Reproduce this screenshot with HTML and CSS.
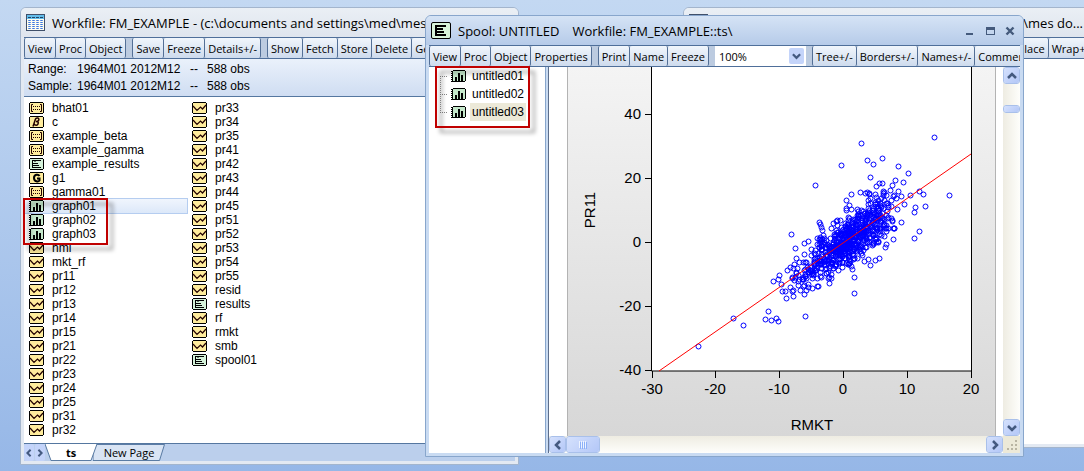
FILE: index.html
```
<!DOCTYPE html>
<html lang="en">
<head>
<meta charset="utf-8">
<title>Workfile: FM_EXAMPLE</title>
<link rel="stylesheet" href="styles.css">
</head>
<body>
<svg class="defs" aria-hidden="true">
  <symbol id="series" viewBox="0 0 15 12"><path d="M1 0h13v1h1v10h-1v1H1v-1H0V1h1z" fill="#000"/><path d="M1 1h13v10H1z" fill="#ffec9c"/><path d="M1 4l4 4.500L8.500 5l2 2L14 3" fill="none" stroke="#200" stroke-width="1.200"/></symbol>
  <symbol id="matrix" viewBox="0 0 15 12"><path d="M1 0h13v1h1v10h-1v1H1v-1H0V1h1z" fill="#000"/><path d="M1 1h13v10H1z" fill="#ffec9c"/><path d="M4 2.500H2.500v7H4M11 2.500h1.500v7H11" fill="none" stroke="#200"/><path d="M4 4h1v1H4zM6 4h1v1H6zM8 4h1v1H8zM10 4h1v1h-1zM4 7h1v1H4zM6 7h1v1H6zM8 7h1v1H8zM10 7h1v1h-1z" fill="#200"/></symbol>
  <symbol id="coef" viewBox="0 0 15 12"><path d="M1 0h13v1h1v10h-1v1H1v-1H0V1h1z" fill="#000"/><path d="M1 1h13v10H1z" fill="#ffec9c"/><path d="M4 10.500L6.500 3C7 1.500 10.500 1.500 9.800 4 9.500 5.500 8 5.500 7 5.500 9.500 5.500 9.500 6.500 9 8 8.500 9.500 6 9.500 5.200 8.200" fill="none" stroke="#200" stroke-width="1.500"/></symbol>
  <symbol id="group" viewBox="0 0 15 12"><path d="M1 0h13v1h1v10h-1v1H1v-1H0V1h1z" fill="#000"/><path d="M1 1h13v10H1z" fill="#ffec9c"/><path d="M10.500 4C9.500 2 5 2 5 6s4.500 4 5.500 2.500V6.500H8" fill="none" stroke="#000" stroke-width="2"/></symbol>
  <symbol id="spool" viewBox="0 0 15 12"><path d="M1 0h13v1h1v10h-1v1H1v-1H0V1h1z" fill="#000"/><path d="M1 1h13v10H1z" fill="#d5f2da"/><path d="M3 2.500h9M3.500 2v8M3 5.500h6M6 3v1M3 7.500h7M3 9.500h9" fill="none" stroke="#000"/></symbol>
  <symbol id="graph" viewBox="0 0 15 12"><path d="M2 0h12v1h1v10h-1v1H2v-1H1V1h1z" fill="#000"/><path d="M2 1h12v10H2z" fill="#c5e8cb"/><path d="M0 1h2v1H0zM0 3h2v1H0zM0 5h2v1H0zM0 7h2v1H0zM0 9h2v1H0zM0 11h2v1H0zM4 7h2v4H4zM7 3h2v8H7zM10 5h2v6h-2z" fill="#000"/></symbol>
  <symbol id="left" viewBox="0 0 10 10"><path d="M7 1L3 5l4 4" fill="none" stroke="#445a80" stroke-width="2.500"/></symbol>
  <symbol id="right" viewBox="0 0 10 10"><path d="M3 1l4 4-4 4" fill="none" stroke="#445a80" stroke-width="2.500"/></symbol>
  <symbol id="up" viewBox="0 0 10 10"><path d="M1 7l4-4 4 4" fill="none" stroke="#445a80" stroke-width="2.500"/></symbol>
  <symbol id="down" viewBox="0 0 10 10"><path d="M1 3l4 4 4-4" fill="none" stroke="#445a80" stroke-width="2.500"/></symbol>
</svg>

<main class="desktop">
  <section class="window workfile">
    <header class="titlebar">
      <svg class="title-icon" viewBox="0 0 19 17"><path d="M0 0h19v17H0z" fill="#40506a"/><path d="M1 1h17v4H1z" fill="#62bdeb"/><path d="M2 3h3v1H2zM6 3h3v1H6zM10 3h3v1h-3zM14 3h3v1h-3z" fill="#246"/><path d="M1 5h17v11H1z" fill="#fffef0"/><path d="M3.500 6v9M7.500 6v9M11.500 6v9M15.500 6v9" stroke="#3e78e0" stroke-width="2.500" stroke-dasharray="1 1"/></svg>
      <h1>Workfile: FM_EXAMPLE - (c:\documents and settings\med\mes do...</h1>
    </header>
    <nav class="toolbar">
      <button>View</button><button>Proc</button><button>Object</button><span class="gap"></span>
      <button>Save</button><button>Freeze</button><button>Details+/-</button><span class="gap"></span>
      <button>Show</button><button>Fetch</button><button>Store</button><button>Delete</button><button>Genr</button>
    </nav>
    <dl class="info">
      <dt>Range:</dt><dd>1964M01 2012M12</dd><dd>--</dd><dd>588 obs</dd>
      <dt>Sample:</dt><dd>1964M01 2012M12</dd><dd>--</dd><dd>588 obs</dd>
    </dl>
    <div class="objects">
      <ul>
        <li><svg><use href="#matrix"/></svg>bhat01</li>
        <li><svg><use href="#coef"/></svg>c</li>
        <li><svg><use href="#matrix"/></svg>example_beta</li>
        <li><svg><use href="#matrix"/></svg>example_gamma</li>
        <li><svg><use href="#spool"/></svg>example_results</li>
        <li><svg><use href="#group"/></svg>g1</li>
        <li><svg><use href="#matrix"/></svg>gamma01</li>
        <li class="selected"><svg><use href="#graph"/></svg>graph01</li>
        <li><svg><use href="#graph"/></svg>graph02</li>
        <li><svg><use href="#graph"/></svg>graph03</li>
        <li><svg><use href="#series"/></svg>hml</li>
        <li><svg><use href="#series"/></svg>mkt_rf</li>
        <li><svg><use href="#series"/></svg>pr11</li>
        <li><svg><use href="#series"/></svg>pr12</li>
        <li><svg><use href="#series"/></svg>pr13</li>
        <li><svg><use href="#series"/></svg>pr14</li>
        <li><svg><use href="#series"/></svg>pr15</li>
        <li><svg><use href="#series"/></svg>pr21</li>
        <li><svg><use href="#series"/></svg>pr22</li>
        <li><svg><use href="#series"/></svg>pr23</li>
        <li><svg><use href="#series"/></svg>pr24</li>
        <li><svg><use href="#series"/></svg>pr25</li>
        <li><svg><use href="#series"/></svg>pr31</li>
        <li><svg><use href="#series"/></svg>pr32</li>
      </ul>
      <ul>
        <li><svg><use href="#series"/></svg>pr33</li>
        <li><svg><use href="#series"/></svg>pr34</li>
        <li><svg><use href="#series"/></svg>pr35</li>
        <li><svg><use href="#series"/></svg>pr41</li>
        <li><svg><use href="#series"/></svg>pr42</li>
        <li><svg><use href="#series"/></svg>pr43</li>
        <li><svg><use href="#series"/></svg>pr44</li>
        <li><svg><use href="#series"/></svg>pr45</li>
        <li><svg><use href="#series"/></svg>pr51</li>
        <li><svg><use href="#series"/></svg>pr52</li>
        <li><svg><use href="#series"/></svg>pr53</li>
        <li><svg><use href="#series"/></svg>pr54</li>
        <li><svg><use href="#series"/></svg>pr55</li>
        <li><svg><use href="#series"/></svg>resid</li>
        <li><svg><use href="#spool"/></svg>results</li>
        <li><svg><use href="#series"/></svg>rf</li>
        <li><svg><use href="#series"/></svg>rmkt</li>
        <li><svg><use href="#series"/></svg>smb</li>
        <li><svg><use href="#spool"/></svg>spool01</li>
      </ul>
      <div class="callout callout-graphs"></div>
    </div>
    <footer class="pages">
      <button class="nudge" aria-label="Previous page"><svg><use href="#left"/></svg></button>
      <button class="nudge" aria-label="Next page"><svg><use href="#right"/></svg></button>
      <button class="page current"><svg viewBox="0 0 52 18" preserveAspectRatio="none"><path d="M0 0l6 17.500h40L52 0" fill="#fff" stroke="#5577a0"/></svg><span>ts</span></button>
      <button class="page"><svg viewBox="0 0 72 18" preserveAspectRatio="none"><path d="M3 .5h68.500l-5 17H0V9z" fill="#d9e4f4" stroke="#5577a0"/></svg><span>New Page</span></button>
    </footer>
  </section>

  <section class="window other">
    <header class="titlebar">
      <svg class="title-icon" viewBox="0 0 19 17"><path d="M0 0h19v17H0z" fill="#40506a"/><path d="M1 1h17v4H1z" fill="#2858f0"/><path d="M1 5h17v11H1z" fill="#fff"/></svg>
      <h2>d\mes do...</h2>
    </header>
    <nav class="toolbar"><button>Replace</button><button class="wrap">Wrap+/-</button></nav>
    <div class="blank"></div>
  </section>

  <section class="window spool">
    <header class="titlebar">
      <svg class="title-icon" viewBox="0 0 20 17"><rect x=".5" y=".5" width="19" height="16" rx="1.500" fill="#d8f3da" stroke="#000"/><path d="M4 3h11v2H4zM4 3h2v11H4zM4 6h8v2H4zM4 9h9v2H4zM4 12h11v2H4z"/></svg>
      <h2>Spool: UNTITLED</h2><h2 class="subtitle">Workfile: FM_EXAMPLE::ts\</h2>
      <div class="controls">
        <button aria-label="Minimize"><svg viewBox="0 0 10 10"><path d="M1 7h7v2H1z"/></svg></button>
        <button aria-label="Maximize"><svg viewBox="0 0 10 10"><path d="M1 1h9v8H1zM2 4v4h7V4z" fill-rule="evenodd"/></svg></button>
        <button aria-label="Close"><svg viewBox="0 0 10 10"><path d="M1.500 1.500l7 7M8.500 1.500l-7 7" stroke="#445a7c" stroke-width="2.400"/></svg></button>
      </div>
    </header>
    <nav class="toolbar">
      <button>View</button><button>Proc</button><button>Object</button><button>Properties</button><span class="gap"></span>
      <button>Print</button><button>Name</button><button>Freeze</button><span class="gap"></span>
      <div class="zoom"><select aria-label="Zoom"><option>100%</option></select><svg><use href="#down"/></svg></div><span class="gap"></span>
      <button>Tree+/-</button><button>Borders+/-</button><button>Names+/-</button><button>Comments+/-</button>
    </nav>
    <div class="content">
      <div class="tree">
        <ul>
          <li><svg><use href="#graph"/></svg><span>untitled01</span></li>
          <li><svg><use href="#graph"/></svg><span>untitled02</span></li>
          <li><svg><use href="#graph"/></svg><span class="active">untitled03</span></li>
        </ul>
        <div class="callout callout-tree"></div>
      </div>
      <div class="view">
        <div class="sheet">
          <svg class="plot" viewBox="568 67 427 369" role="img" aria-label="PR11 against RMKT">
            <path d="M651.500 60h320v311h-320z" fill="#fff" stroke="#000"/>
            <path d="M645 114.500h6M645 178.500h6M645 242.500h6M645 306.500h6M645 370.500h6M652.500 371v7M715.500 371v7M779.500 371v7M843.500 371v7M907.500 371v7M971.500 371v7" stroke="#000"/>
            <path id="dots" fill="none" stroke="#00f"/>
            <path d="M659 371L971 154" stroke="#f00"/>
            <g class="ylabels"><text x="641" y="119">40</text><text x="641" y="183">20</text><text x="641" y="247">0</text><text x="641" y="311">-20</text><text x="641" y="375">-40</text></g>
            <g class="xlabels"><text x="652" y="394">-30</text><text x="715" y="394">-20</text><text x="779" y="394">-10</text><text x="843" y="394">0</text><text x="907" y="394">10</text><text x="971" y="394">20</text><text x="812" y="430">RMKT</text><text transform="translate(595 210) rotate(-90)">PR11</text></g>
          </svg>
        </div>
        <div class="vscroll">
          <button aria-label="Scroll up"><svg><use href="#up"/></svg></button>
          <div class="vthumb"></div>
          <button aria-label="Scroll down"><svg><use href="#down"/></svg></button>
        </div>
        <div class="hscroll">
          <button aria-label="Scroll left"><svg><use href="#left"/></svg></button>
          <div class="hthumb"><svg viewBox="0 0 9 8"><path d="M.5 0v7M2.500 0v7M4.500 0v7M6.500 0v7" stroke="#eef4ff"/><path d="M1.500 1v7M3.500 1v7M5.500 1v7M7.500 1v7" stroke="#8cb0f8"/></svg></div>
          <button aria-label="Scroll right"><svg><use href="#right"/></svg></button>
        </div>
        <svg class="grip" viewBox="0 0 17 17"><path d="M12 4h2v2h-2zM8 8h2v2H8zM12 8h2v2h-2zM4 12h2v2H4zM8 12h2v2H8zM12 12h2v2h-2z" fill="#b8b4a2"/></svg>
      </div>
    </div>
  </section>
</main>
<script src="plot.js"></script>
</body>
</html>
```

FILE: plot.js
```
// Scatter of PR11 against RMKT, in the plot's own coordinates.
const outer = [[934,137],[861,143],[867,160],[873,164],[882,158],[841,165],[898,166],[908,173],[870,177],[815,185],[895,180],[903,182],[879,183],[882,183],[876,186],[892,185],[851,194],[860,192],[867,192],[846,200],[875,194],[883,193],[898,191],[896,198],[901,196],[910,195],[919,191],[923,194],[949,195],[915,207],[914,212],[925,206],[904,204],[897,209],[901,222],[919,231],[914,238],[837,220],[836,221],[819,222],[821,227],[820,224],[791,234],[831,228],[846,210],[849,205],[795,248],[804,243],[808,241],[817,238],[796,258],[779,275],[773,281],[778,279],[781,284],[782,291],[785,291],[786,298],[792,291],[800,290],[808,287],[818,286],[829,283],[831,278],[854,277],[854,293],[851,266],[852,269],[805,316],[768,311],[765,319],[771,320],[776,318],[778,321],[743,325],[733,318],[698,346],[864,261],[868,259],[870,265],[875,260],[879,258],[787,270],[790,267],[793,290],[797,268],[885,247],[886,244],[893,239]];
let seed = 20121;
const rand = () => (seed = (seed * 16807) % 2147483647) / 2147483647;
const normal = () => Math.sqrt(-2 * Math.log(rand())) * Math.cos(2 * Math.PI * rand());
const points = outer.slice();
while (points.length < 730) {
  const x = Math.round(849 + normal() * 26);
  const spread = Math.max(9, 9 + (x - 795) * 0.06);
  const shift = normal() * spread;
  const y = Math.round(371 - (x - 659) * 0.6955 + 1 + shift);
  if (x < 790 || x > 894 || shift > 24 || shift < -36) continue;
  points.push([x, y]);
}
document.getElementById("dots").setAttribute("d", points.map(([x, y]) =>
  `M${x - 2} ${y + 0.5}a2.500 2.500 0 1 1 5 0a2.500 2.500 0 1 1 -5 0`).join(""));
```

FILE: styles.css
```
* { box-sizing: border-box; }
body { margin: 0; font: 12px/14px "Liberation Sans", Arial, sans-serif; color: #000; }
button { font: inherit; color: inherit; border: 0; padding: 0; margin: 0; background: none; }
ul, dl, dd, h1, h2 { margin: 0; padding: 0; list-style: none; }
svg { display: block; flex: none; }
.defs { position: absolute; width: 0; height: 0; }

.desktop { position: relative; min-height: 100vh; overflow: hidden; background: linear-gradient(#c3d8f2, #96b7e7); }

.window { position: absolute; display: flex; flex-direction: column; overflow: hidden; border: 1px solid #a3b5cd; border-radius: 6px 6px 0 0; background: #e3e9f2; padding: 0 3px 3px; }
.workfile { left: 20px; top: 7px; width: 499px; height: 458px; }
.other { left: 683px; top: 7px; width: 440px; height: 441px; }
.spool { left: 425px; top: 15px; width: 599px; height: 442px; border-color: #88a6cc; background: #c9dbf2; }

.titlebar { display: flex; align-items: center; height: 29px; flex: none; gap: 7px; background: linear-gradient(#eaeff5, #dfe5ee); margin: 0 -3px; padding: 0 5px; }
.titlebar h1, .titlebar h2 { font: 13px/20px "Open Sans", "Noto Sans", sans-serif; white-space: nowrap; }
.title-icon { width: 19px; height: 17px; }
.spool .titlebar { background: linear-gradient(#d5e3f5, #b6cbe9); padding-right: 8px; }
.spool .title-icon { width: 20px; }
.spool .subtitle { margin-left: 6px; }
.other h2 { margin-left: auto; margin-right: 34px; }
.controls { display: flex; gap: 10px; margin-left: auto; }
.controls svg { width: 10px; height: 10px; fill: #445a7c; }

.toolbar { display: flex; flex: none; height: 22px; overflow: hidden; border: solid #4f6f9a; border-width: 1px 0; background: #bccbe0; font: 11px/19px "Open Sans", "Noto Sans", sans-serif; }
.toolbar button { flex: none; padding: 0 3px; border: solid #536f96; border-width: 0 1px 0 0; background: linear-gradient(#f1f6fc, #cedbed); white-space: nowrap; border-radius: 2px; }
.toolbar button:first-child, .gap + button { border-left-width: 1px; }
.gap { flex: none; width: 6px; }
.other .toolbar { justify-content: flex-end; }
.other .wrap { margin-right: 22px; }
.blank { flex: 1; background: #fff; }

.info { display: grid; grid-template-columns: 49px 113px 17px 1fr; padding: 2px 4px 1px; line-height: 17px; background: linear-gradient(#eaf1fb, #cfddf2); border-bottom: 1px solid #5577a0; }
.objects { position: relative; flex: 1; display: flex; background: #fff; padding-top: 4px; }
.objects ul { width: 163px; }
.objects li { display: flex; align-items: center; gap: 8px; height: 14px; padding-left: 5px; }
.objects li svg, .tree li svg { width: 15px; height: 12px; }
.objects .selected { background: linear-gradient(#f0f5fd, #dce8f9); box-shadow: 0 0 0 1px #b5cdf0; }

.callout { position: absolute; border: 2px solid #c00000; filter: drop-shadow(5px 5px 2px rgba(0, 0, 0, .4)); }
.callout-graphs { left: -1px; top: 101px; width: 85px; height: 47px; }
.callout-tree { left: 6px; top: -1px; width: 95px; height: 62px; }

.pages { display: flex; height: 18px; flex: none; background: #bbcfec; border-top: 1px solid #5577a0; }
.nudge { width: 10px; display: grid; place-items: center; background: #c4d4fa; border-radius: 2px; margin-right: 1px; }
.nudge svg { width: 8px; height: 10px; }
.page { position: relative; width: 72px; font: 11px/17px "Open Sans", "Noto Sans", sans-serif; margin-left: -4px; }
.page.current { width: 52px; font-weight: 700; margin-left: -1px; z-index: 1; }
.page svg { position: absolute; inset: 0; width: 100%; height: 100%; }
.page span { position: relative; }

.zoom { position: relative; flex: none; width: 91px; background: #fff; }
.zoom select { appearance: none; width: 100%; height: 20px; border: 0; background: none; padding: 0 4px; font: inherit; }
.zoom svg { position: absolute; right: 2px; top: 2px; width: 15px; height: 16px; padding: 3px; background: #c4d4fa; border-radius: 2px; pointer-events: none; }

.content { flex: 1; display: flex; min-height: 0; }
.tree { position: relative; width: 117px; flex: none; background: #fff; border-right: 1px solid #88a6cc; }
.tree li { display: flex; align-items: center; height: 18px; gap: 4px; }
.tree li::before { content: ""; width: 7px; margin-left: 11px; border-top: 1px dotted #888; }
.tree ul { background: repeating-linear-gradient(#999 0 1px, transparent 1px 2px) 11px 9px / 1px 36px no-repeat; }
.tree li span { padding: 0 2px; line-height: 18px; }
.tree .active { background: #ece9d8; }
.view { flex: 1; min-width: 0; display: grid; grid-template: 1fr 17px / 1fr 17px; margin-left: 2px; border-left: 1px solid #5e6f8c; background: #fff; }
.sheet { min-height: 0; overflow: hidden; margin: 0 7px 0 18px; border: solid #b3b3b3; border-width: 0 1px; background: linear-gradient(#f4f4f4, #d7d7d7); }
.plot { width: 100%; height: 100%; font: 15px "Liberation Sans", Arial, sans-serif; }
.ylabels { text-anchor: end; }
.xlabels { text-anchor: middle; }
.vscroll, .hscroll { display: flex; background: linear-gradient(90deg, #eeece2, #fefefb); }
.hscroll { background: linear-gradient(#eeece2, #fefefb); }
.vscroll { flex-direction: column; }
.vscroll button, .hscroll button, .vthumb, .hthumb { display: grid; place-items: center; flex: none; width: 17px; height: 17px; border: 1px solid #fff; outline: 1px solid #a9c0ea; outline-offset: -1px; border-radius: 3px; background: linear-gradient(135deg, #d5e1fd, #b3c7f7); }
.vscroll button svg, .hscroll button svg { width: 10px; height: 10px; }
.vscroll button:last-child { margin-top: auto; }
.hscroll button:last-child { margin-left: auto; }
.vthumb { height: 8px; margin-top: 21px; }
.hthumb { width: 34px; }
.hthumb svg { width: 9px; height: 8px; }
.grip { width: 17px; height: 17px; background: #ece9d8; }
```
